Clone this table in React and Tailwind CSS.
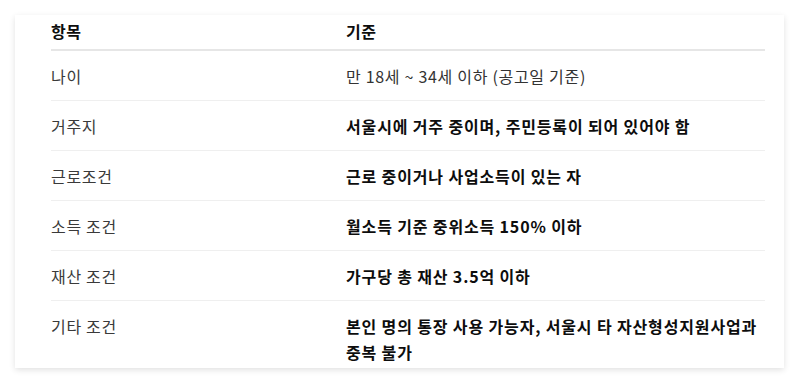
const rows = [
  { item: "나이", rule: "만 18세 ~ 34세 이하 (공고일 기준)", bold: false },
  { item: "거주지", rule: "서울시에 거주 중이며, 주민등록이 되어 있어야 함", bold: true },
  { item: "근로조건", rule: "근로 중이거나 사업소득이 있는 자", bold: true },
  { item: "소득 조건", rule: "월소득 기준 중위소득 150% 이하", bold: true },
  { item: "재산 조건", rule: "가구당 총 재산 3.5억 이하", bold: true },
  { item: "기타 조건", rule: "본인 명의 통장 사용 가능자, 서울시 타 자산형성지원사업과 중복 불가", bold: true },
];

const App = () => {
  return (
    <main
      className="w-[800px] h-[383px] bg-white overflow-hidden pt-[15px] pl-[15px]"
      style={{ fontFamily: '"Noto Sans CJK KR", "Noto Sans", sans-serif' }}
    >
      <div className="w-[769px] h-[353px] bg-white shadow-[0_2px_6px_rgba(0,0,0,0.12)] pl-[36px] pr-[19px] overflow-hidden">
        <table className="w-full border-collapse text-[16px] leading-[26px]">
          <thead>
            <tr className="border-b-2 border-[#e6e6e6] text-[#0d0d0d]">
              <th className="text-left font-bold pt-[3px] pb-[5px] w-[295px] tracking-[0.6px]">항목</th>
              <th className="text-left font-bold pt-[3px] pb-[5px] tracking-[0.6px]">기준</th>
            </tr>
          </thead>
          <tbody>
            {rows.map((r, i) => (
              <tr
                key={r.item}
                className={i < rows.length - 1 ? "border-b border-[#efefef]" : ""}
              >
                <td className="pt-[12px] pb-[11px] align-top text-[#3a3a3a] tracking-[0.7px]">{r.item}</td>
                <td
                  className={
                    "pt-[12px] pb-[11px] align-top " +
                    (r.bold ? "font-bold text-[#0d0d0d] tracking-[0.85px]" : "font-normal text-[#333] tracking-[0.7px]")
                  }
                >
                  {r.rule}
                </td>
              </tr>
            ))}
          </tbody>
        </table>
      </div>
    </main>
  );
};

export default App;
